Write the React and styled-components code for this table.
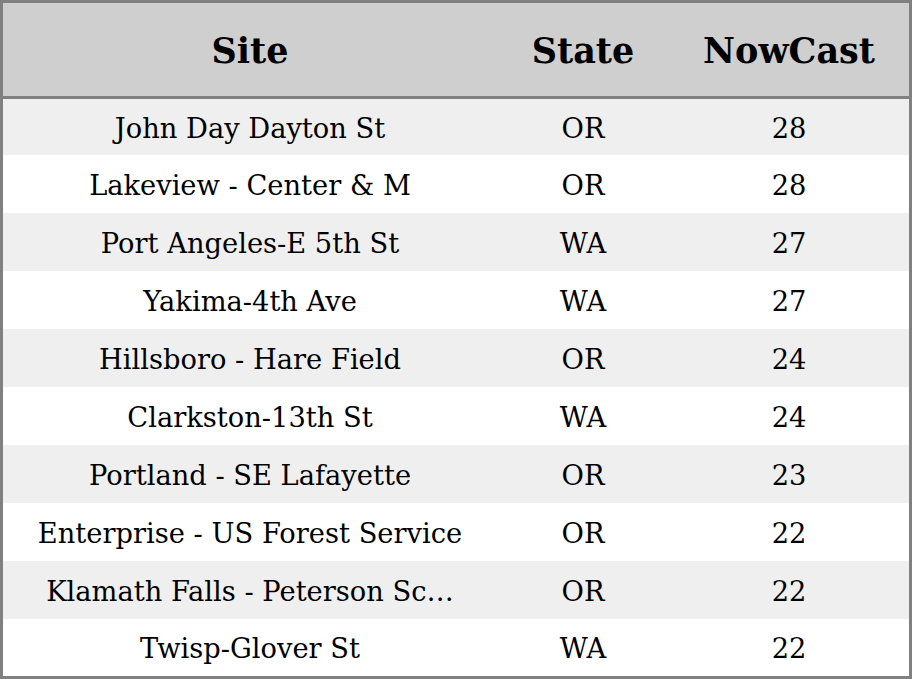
import React from "react";
import styled, { createGlobalStyle } from "styled-components";

const Global = createGlobalStyle`
  html, body { margin: 0; padding: 0; background: #ffffff; }
  body { font-family: "DejaVu Serif", serif; }
`;

const Frame = styled.div`
  width: 912px;
  height: 679px;
  box-sizing: border-box;
  border: 3px solid #808080;
  display: flex;
  flex-direction: column;
  overflow: hidden;
`;

const cols = "494px 172px 1fr";

const HeaderRow = styled.div`
  display: grid;
  grid-template-columns: ${cols};
  height: 93px;
  flex: none;
  background: #cfcfcf;
  border-bottom: 3px solid #808080;
`;

const HeaderCell = styled.div`
  display: flex;
  align-items: center;
  justify-content: center;
  padding-top: 2px;
  font-family: "DejaVu Serif", serif;
  font-weight: bold;
  font-size: 35px;
  color: #000;
`;

const Row = styled.div`
  display: grid;
  grid-template-columns: ${cols};
  height: ${(p) => p.$h}px;
  flex: none;
  background: ${(p) => (p.$alt ? "#efefef" : "#ffffff")};
`;

const Cell = styled.div`
  display: flex;
  align-items: center;
  justify-content: center;
  padding-top: 2px;
  font-family: "DejaVu Serif", serif;
  font-size: 27.3px;
  color: #000;
  white-space: nowrap;
`;

const data = [
  ["John Day Dayton St", "OR", 28],
  ["Lakeview - Center & M", "OR", 28],
  ["Port Angeles-E 5th St", "WA", 27],
  ["Yakima-4th Ave", "WA", 27],
  ["Hillsboro - Hare Field", "OR", 24],
  ["Clarkston-13th St", "WA", 24],
  ["Portland - SE Lafayette", "OR", 23],
  ["Enterprise - US Forest Service", "OR", 22],
  ["Klamath Falls - Peterson Sc…", "OR", 22],
  ["Twisp-Glover St", "WA", 22],
];

export default function App() {
  return (
    <>
      <Global />
      <Frame>
        <HeaderRow>
          <HeaderCell>Site</HeaderCell>
          <HeaderCell>State</HeaderCell>
          <HeaderCell>NowCast</HeaderCell>
        </HeaderRow>
        {data.map(([site, st, v], i) => (
          <Row
            key={i}
            $alt={i % 2 === 0}
            $h={i === 0 ? 56 : i === data.length - 1 ? 57 : 58}
          >
            <Cell>{site}</Cell>
            <Cell>{st}</Cell>
            <Cell>{v}</Cell>
          </Row>
        ))}
      </Frame>
    </>
  );
}
